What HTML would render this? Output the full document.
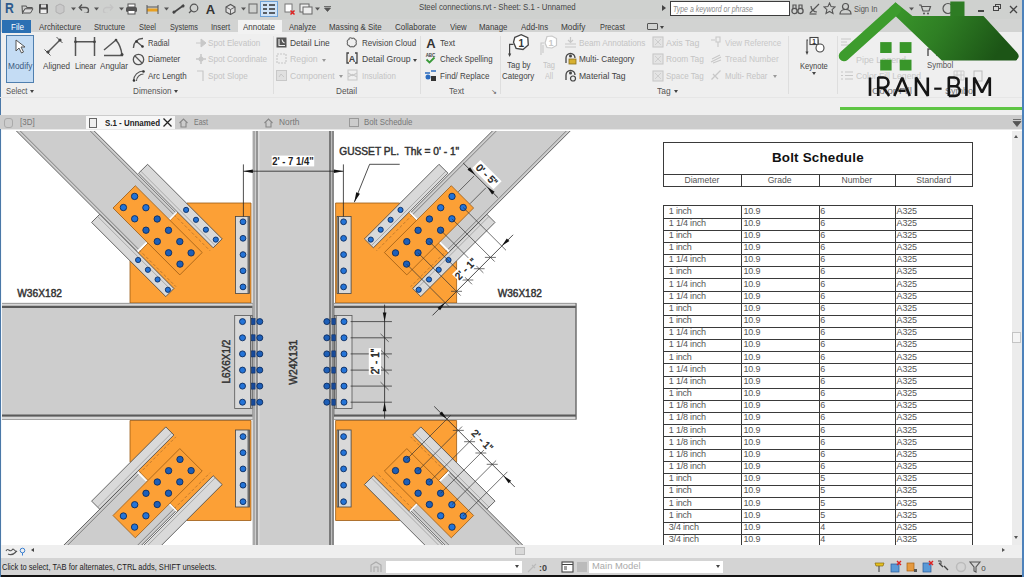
<!DOCTYPE html>
<html><head><meta charset="utf-8">
<style>
*{margin:0;padding:0;box-sizing:border-box}
html,body{width:1024px;height:577px;overflow:hidden;background:#fff;font-family:"Liberation Sans",sans-serif;color:#333}
.a{position:absolute;white-space:pre}
#title{left:0;top:0;width:1024px;height:19px;background:#cfd1cf}
#tabs{left:0;top:19px;width:1024px;height:13px;background:#d2d3d2}
#ribbon{left:0;top:32px;width:1024px;height:64px;background:#efefef}
#rib2{left:0;top:96px;width:1024px;height:19px;background:#efefef}
#vtabs{left:0;top:115px;width:1024px;height:14px;background:#cfcfcf}
#canvas{left:0;top:129px;width:1024px;height:416px;background:#fff}
#hsb{left:0;top:545px;width:1024px;height:13px;background:#efefef}
#status{left:0;top:558px;width:1024px;height:17px;background:#d4d4d4}
#blk{left:0;top:575px;width:1024px;height:2px;background:#111}
.t8{font-size:8px}
.tab{font-size:8.2px;color:#3a3a3a;top:22px}
.rb{font-size:8.4px;color:#333;word-spacing:2px}
.gr{color:#b9b9b9}
</style></head><body>
<div id="title" class="a"></div>
<div id="tabs" class="a"></div>
<div id="ribbon" class="a"></div>
<div id="rib2" class="a"></div>
<div id="vtabs" class="a"></div>
<div id="canvas" class="a"></div>
<div id="hsb" class="a"></div>
<div id="status" class="a"></div>
<div id="blk" class="a"></div>
<div class="a" style="left:0.0px;top:0.0px;width:1.3px;height:577.0px;background:#4a78a8"></div>
<div class="a" style="left:1.3px;top:129.0px;width:1.0px;height:416.0px;background:#f4f8fc"></div>
<div class="a" style="left:4.7px;top:3.3px;line-height:10px;font-size:15px;color:#2d5a8c;font-weight:bold;transform-origin:0 50%;transform:scaleX(0.812);">R</div>
<div class="a" style="left:418.7px;top:1.6px;line-height:10px;font-size:9px;color:#444;transform-origin:0 50%;transform:scaleX(0.867);">Steel connections.rvt - Sheet: S.1 - Unnamed</div>
<div class="a" style="left:670.2px;top:1.2px;width:119.7px;height:14.5px;background:#fff;border:1px solid #3c3c3c"></div>
<div class="a" style="left:673.0px;top:3.5px;line-height:10px;font-size:9px;color:#8a8a8a;transform-origin:0 50%;transform:scaleX(0.773);font-style:italic;">Type a keyword or phrase</div>
<div class="a" style="left:662px;top:5px;width:0;height:0;border-left:4px solid #444;border-top:3.5px solid transparent;border-bottom:3.5px solid transparent"></div>
<div class="a" style="left:854.3px;top:4.0px;line-height:10px;font-size:9px;color:#555;transform-origin:0 50%;transform:scaleX(0.835);">Sign In</div>
<div class="a" style="left:978.0px;top:10.3px;width:5.5px;height:1.8px;background:#444"></div>
<div class="a" style="left:995.0px;top:4.0px;width:6.0px;height:5.0px;border:1px solid #444"></div>
<div class="a" style="left:993.0px;top:6.0px;width:6.0px;height:5.0px;border:1px solid #444;background:#d6d6d6"></div>
<svg class="a" style="left:1009px;top:4.5px" width="9" height="9"><path d="M1 1L8 8M8 1L1 8" stroke="#444" stroke-width="1.3"/></svg>
<div class="a" style="left:2.0px;top:20.0px;width:29.4px;height:12.6px;background:#2b70b3"></div>
<div class="a" style="left:10.5px;top:21.5px;line-height:10px;font-size:9px;color:#fff;transform-origin:0 50%;transform:scaleX(0.896);">File</div>
<div class="a" style="left:237.6px;top:19.6px;width:44.4px;height:14.0px;background:#f2f2f2"></div>
<div class="a" style="left:39.0px;top:22.0px;line-height:10px;font-size:9px;color:#3a3a3a;transform-origin:0 50%;transform:scaleX(0.875);">Architecture</div>
<div class="a" style="left:94.0px;top:22.0px;line-height:10px;font-size:9px;color:#3a3a3a;transform-origin:0 50%;transform:scaleX(0.849);">Structure</div>
<div class="a" style="left:139.0px;top:22.0px;line-height:10px;font-size:9px;color:#3a3a3a;transform-origin:0 50%;transform:scaleX(0.829);">Steel</div>
<div class="a" style="left:169.8px;top:22.0px;line-height:10px;font-size:9px;color:#3a3a3a;transform-origin:0 50%;transform:scaleX(0.809);">Systems</div>
<div class="a" style="left:211.0px;top:22.0px;line-height:10px;font-size:9px;color:#3a3a3a;transform-origin:0 50%;transform:scaleX(0.844);">Insert</div>
<div class="a" style="left:243.2px;top:22.0px;line-height:10px;font-size:9px;color:#3a3a3a;transform-origin:0 50%;transform:scaleX(0.888);">Annotate</div>
<div class="a" style="left:289.2px;top:22.0px;line-height:10px;font-size:9px;color:#3a3a3a;transform-origin:0 50%;transform:scaleX(0.846);">Analyze</div>
<div class="a" style="left:329.0px;top:22.0px;line-height:10px;font-size:9px;color:#3a3a3a;transform-origin:0 50%;transform:scaleX(0.876);">Massing &amp; Site</div>
<div class="a" style="left:395.3px;top:22.0px;line-height:10px;font-size:9px;color:#3a3a3a;transform-origin:0 50%;transform:scaleX(0.891);">Collaborate</div>
<div class="a" style="left:449.5px;top:22.0px;line-height:10px;font-size:9px;color:#3a3a3a;transform-origin:0 50%;transform:scaleX(0.863);">View</div>
<div class="a" style="left:479.4px;top:22.0px;line-height:10px;font-size:9px;color:#3a3a3a;transform-origin:0 50%;transform:scaleX(0.873);">Manage</div>
<div class="a" style="left:521.0px;top:22.0px;line-height:10px;font-size:9px;color:#3a3a3a;transform-origin:0 50%;transform:scaleX(0.877);">Add-Ins</div>
<div class="a" style="left:561.4px;top:22.0px;line-height:10px;font-size:9px;color:#3a3a3a;transform-origin:0 50%;transform:scaleX(0.917);">Modify</div>
<div class="a" style="left:599.5px;top:22.0px;line-height:10px;font-size:9px;color:#3a3a3a;transform-origin:0 50%;transform:scaleX(0.816);">Precast</div>
<div class="a" style="left:647.0px;top:23.0px;width:11.0px;height:7.0px;border:1px solid #555;border-radius:1px"></div>
<div class="a" style="left:660px;top:26px;border-top:3px solid #444;border-left:2.5px solid transparent;border-right:2.5px solid transparent"></div>
<div class="a" style="left:0.0px;top:96.5px;width:1024.0px;height:1.0px;background:#e6e6e6"></div>
<div class="a" style="left:272.8px;top:36.0px;width:1.0px;height:58.0px;background:#dedede"></div>
<div class="a" style="left:419.7px;top:36.0px;width:1.0px;height:58.0px;background:#dedede"></div>
<div class="a" style="left:499.7px;top:36.0px;width:1.0px;height:58.0px;background:#dedede"></div>
<div class="a" style="left:788.3px;top:36.0px;width:1.0px;height:58.0px;background:#dedede"></div>
<div class="a" style="left:837.0px;top:36.0px;width:1.0px;height:58.0px;background:#dedede"></div>
<div class="a" style="left:6.2px;top:35.2px;width:27.7px;height:47.4px;background:#c4dcf4;border:1px solid #4f7faf"></div>
<div class="a" style="left:8.0px;top:60.8px;line-height:10px;font-size:9px;color:#3d5a80;transform-origin:0 50%;transform:scaleX(0.924);">Modify</div>
<div class="a" style="left:5.5px;top:85.8px;line-height:10px;font-size:9px;color:#555;transform-origin:0 50%;transform:scaleX(0.860);">Select</div>
<div class="a" style="left:30px;top:89.5px;border-top:3px solid #444;border-left:2.5px solid transparent;border-right:2.5px solid transparent"></div>
<div class="a" style="left:43.0px;top:60.7px;line-height:10px;font-size:9px;color:#444;transform-origin:0 50%;transform:scaleX(0.899);">Aligned</div>
<div class="a" style="left:75.0px;top:60.7px;line-height:10px;font-size:9px;color:#444;transform-origin:0 50%;transform:scaleX(0.839);">Linear</div>
<div class="a" style="left:100.0px;top:60.7px;line-height:10px;font-size:9px;color:#444;transform-origin:0 50%;transform:scaleX(0.903);">Angular</div>
<div class="a" style="left:147.6px;top:37.9px;line-height:10px;font-size:9px;color:#444;transform-origin:0 50%;transform:scaleX(0.839);">Radial</div>
<div class="a" style="left:147.6px;top:54.4px;line-height:10px;font-size:9px;color:#444;transform-origin:0 50%;transform:scaleX(0.882);">Diameter</div>
<div class="a" style="left:147.6px;top:71.0px;line-height:10px;font-size:9px;color:#444;transform-origin:0 50%;transform:scaleX(0.887);">Arc Length</div>
<div class="a" style="left:132.5px;top:86.2px;line-height:10px;font-size:9px;color:#555;transform-origin:0 50%;transform:scaleX(0.906);">Dimension</div>
<div class="a" style="left:174px;top:90px;border-top:3px solid #444;border-left:2.5px solid transparent;border-right:2.5px solid transparent"></div>
<div class="a" style="left:207.7px;top:37.9px;line-height:10px;font-size:9px;color:#c4c4c4;transform-origin:0 50%;transform:scaleX(0.899);">Spot Elevation</div>
<div class="a" style="left:207.7px;top:54.4px;line-height:10px;font-size:9px;color:#c4c4c4;transform-origin:0 50%;transform:scaleX(0.909);">Spot Coordinate</div>
<div class="a" style="left:207.7px;top:71.0px;line-height:10px;font-size:9px;color:#c4c4c4;transform-origin:0 50%;transform:scaleX(0.902);">Spot Slope</div>
<div class="a" style="left:290.4px;top:37.9px;line-height:10px;font-size:9px;color:#444;transform-origin:0 50%;transform:scaleX(0.936);">Detail Line</div>
<div class="a" style="left:290.4px;top:54.4px;line-height:10px;font-size:9px;color:#c4c4c4;transform-origin:0 50%;transform:scaleX(0.968);">Region</div>
<div class="a" style="left:290.4px;top:71.0px;line-height:10px;font-size:9px;color:#c4c4c4;transform-origin:0 50%;transform:scaleX(0.959);">Component</div>
<div class="a" style="left:321.5px;top:58.5px;border-top:3px solid #999;border-left:2.5px solid transparent;border-right:2.5px solid transparent"></div>
<div class="a" style="left:338.5px;top:75px;border-top:3px solid #999;border-left:2.5px solid transparent;border-right:2.5px solid transparent"></div>
<div class="a" style="left:361.5px;top:37.9px;line-height:10px;font-size:9px;color:#444;transform-origin:0 50%;transform:scaleX(0.894);">Revision Cloud</div>
<div class="a" style="left:361.5px;top:54.4px;line-height:10px;font-size:9px;color:#444;transform-origin:0 50%;transform:scaleX(0.960);">Detail Group</div>
<div class="a" style="left:361.5px;top:71.0px;line-height:10px;font-size:9px;color:#c4c4c4;transform-origin:0 50%;transform:scaleX(0.880);">Insulation</div>
<div class="a" style="left:413px;top:58.5px;border-top:3px solid #444;border-left:2.5px solid transparent;border-right:2.5px solid transparent"></div>
<div class="a" style="left:336.0px;top:86.0px;line-height:10px;font-size:9px;color:#555;transform-origin:0 50%;transform:scaleX(0.913);">Detail</div>
<div class="a" style="left:439.9px;top:37.9px;line-height:10px;font-size:9px;color:#444;transform-origin:0 50%;transform:scaleX(0.909);">Text</div>
<div class="a" style="left:439.9px;top:54.4px;line-height:10px;font-size:9px;color:#444;transform-origin:0 50%;transform:scaleX(0.876);">Check Spelling</div>
<div class="a" style="left:439.9px;top:71.0px;line-height:10px;font-size:9px;color:#444;transform-origin:0 50%;transform:scaleX(0.890);">Find/ Replace</div>
<div class="a" style="left:448.5px;top:86.0px;line-height:10px;font-size:9px;color:#555;transform-origin:0 50%;transform:scaleX(0.909);">Text</div>
<div class="a" style="left:491px;top:89px;font-size:7px;line-height:6px;color:#555">&#x2198;</div>
<div class="a" style="left:506.5px;top:60.4px;line-height:10px;font-size:9px;color:#444;transform-origin:0 50%;transform:scaleX(0.890);">Tag by</div>
<div class="a" style="left:502.2px;top:71.2px;line-height:10px;font-size:9px;color:#444;transform-origin:0 50%;transform:scaleX(0.882);">Category</div>
<div class="a" style="left:543.0px;top:60.4px;line-height:10px;font-size:9px;color:#c4c4c4;transform-origin:0 50%;transform:scaleX(0.827);">Tag</div>
<div class="a" style="left:545.0px;top:71.2px;line-height:10px;font-size:9px;color:#c4c4c4;transform-origin:0 50%;transform:scaleX(0.800);">All</div>
<div class="a" style="left:578.8px;top:37.9px;line-height:10px;font-size:9px;color:#c4c4c4;transform-origin:0 50%;transform:scaleX(0.909);">Beam Annotations</div>
<div class="a" style="left:578.8px;top:54.4px;line-height:10px;font-size:9px;color:#444;transform-origin:0 50%;transform:scaleX(0.908);">Multi- Category</div>
<div class="a" style="left:578.8px;top:71.0px;line-height:10px;font-size:9px;color:#444;transform-origin:0 50%;transform:scaleX(0.950);">Material Tag</div>
<div class="a" style="left:666.0px;top:37.9px;line-height:10px;font-size:9px;color:#c4c4c4;transform-origin:0 50%;transform:scaleX(0.987);">Axis Tag</div>
<div class="a" style="left:666.0px;top:54.4px;line-height:10px;font-size:9px;color:#c4c4c4;transform-origin:0 50%;transform:scaleX(0.925);">Room Tag</div>
<div class="a" style="left:666.0px;top:71.0px;line-height:10px;font-size:9px;color:#c4c4c4;transform-origin:0 50%;transform:scaleX(0.892);">Space Tag</div>
<div class="a" style="left:724.6px;top:37.9px;line-height:10px;font-size:9px;color:#c8c8c8;transform-origin:0 50%;transform:scaleX(0.885);">View Reference</div>
<div class="a" style="left:724.6px;top:54.4px;line-height:10px;font-size:9px;color:#c8c8c8;transform-origin:0 50%;transform:scaleX(0.931);">Tread Number</div>
<div class="a" style="left:724.6px;top:71.0px;line-height:10px;font-size:9px;color:#c4c4c4;transform-origin:0 50%;transform:scaleX(0.865);">Multi- Rebar</div>
<div class="a" style="left:773px;top:75px;border-top:3px solid #999;border-left:2.5px solid transparent;border-right:2.5px solid transparent"></div>
<div class="a" style="left:657.4px;top:86.0px;line-height:10px;font-size:9px;color:#555;transform-origin:0 50%;transform:scaleX(0.937);">Tag</div>
<div class="a" style="left:674px;top:90px;border-top:3px solid #444;border-left:2.5px solid transparent;border-right:2.5px solid transparent"></div>
<div class="a" style="left:800.0px;top:60.5px;line-height:10px;font-size:9px;color:#444;transform-origin:0 50%;transform:scaleX(0.839);">Keynote</div>
<div class="a" style="left:812px;top:72px;border-top:3px solid #444;border-left:2.5px solid transparent;border-right:2.5px solid transparent"></div>
<div class="a" style="left:856.0px;top:54.5px;line-height:10px;font-size:9px;color:#c8c8c8;transform-origin:0 50%;transform:scaleX(0.989);">Pipe Legend</div>
<div class="a" style="left:856.0px;top:71.0px;line-height:10px;font-size:9px;color:#c8c8c8;transform-origin:0 50%;transform:scaleX(0.955);">Color Fill Legend</div>
<div class="a" style="left:926.5px;top:60.0px;line-height:10px;font-size:9px;color:#555;transform-origin:0 50%;transform:scaleX(0.873);">Symbol</div>
<div class="a" style="left:872.0px;top:86.0px;line-height:10px;font-size:9px;color:#777;transform-origin:0 50%;transform:scaleX(1.127);">Color Fill</div>
<div class="a" style="left:945.0px;top:86.0px;line-height:10px;font-size:9px;color:#777;transform-origin:0 50%;transform:scaleX(1.000);">Symbol</div>
<div class="a" style="left:0.0px;top:115.0px;width:1024.0px;height:14.0px;background:#cccccc"></div>
<div class="a" style="left:1.0px;top:128.6px;width:1022.0px;height:1.0px;background:#e8e8e8"></div>
<div class="a" style="left:86.1px;top:116.0px;width:89.2px;height:13.0px;background:#f7f7f7"></div>
<div class="a" style="left:19.9px;top:117.0px;line-height:10px;font-size:9px;color:#777;transform-origin:0 50%;transform:scaleX(0.885);">[3D]</div>
<div class="a" style="left:104.6px;top:117.5px;line-height:10px;font-size:9px;color:#222;font-weight:bold;transform-origin:0 50%;transform:scaleX(0.880);">S.1 - Unnamed</div>
<svg class="a" style="left:162px;top:117px" width="11" height="11"><path d="M1.5 1.5L9.5 9.5M9.5 1.5L1.5 9.5" stroke="#222" stroke-width="1.3"/></svg>
<div class="a" style="left:194.0px;top:117.0px;line-height:10px;font-size:9px;color:#777;transform-origin:0 50%;transform:scaleX(0.777);">East</div>
<div class="a" style="left:279.0px;top:117.0px;line-height:10px;font-size:9px;color:#777;transform-origin:0 50%;transform:scaleX(0.927);">North</div>
<div class="a" style="left:363.8px;top:117.0px;line-height:10px;font-size:9px;color:#777;transform-origin:0 50%;transform:scaleX(0.872);">Bolt Schedule</div>
<div class="a" style="left:88.6px;top:117.6px;width:8.6px;height:10.0px;border:1px solid #666;background:#eee"></div>
<div class="a" style="left:349.0px;top:117.6px;width:10.0px;height:9.0px;border:1px solid #999"></div>
<div class="a" style="left:4.0px;top:117.6px;width:9.0px;height:10.0px;border:1px solid #aaa;border-radius:3px"></div>
<div class="a" style="left:839.6px;top:107.4px;width:182.4px;height:3.0px;background:#5ec544"></div>
<div class="a" style="left:1022.2px;top:0.0px;width:1.8px;height:577.0px;background:#4d82bb"></div>
<div class="a" style="left:1011.5px;top:131.0px;width:10.0px;height:414.0px;background:#ececec"></div>
<div class="a" style="left:1014px;top:135px;border-bottom:3px solid #555;border-left:2.5px solid transparent;border-right:2.5px solid transparent"></div>
<div class="a" style="left:1014px;top:536px;border-top:3px solid #555;border-left:2.5px solid transparent;border-right:2.5px solid transparent"></div>
<div class="a" style="left:1011.5px;top:332.3px;width:9.7px;height:11.0px;background:#f4f4f4;border:1px solid #c4c4c4"></div>
<div class="a" style="left:1012.0px;top:545.0px;width:10.0px;height:13.0px;background:#efefef"></div>
<div class="a" style="left:515.3px;top:546.7px;width:9.7px;height:8.8px;background:#d9d9d9;border:1px solid #bbb"></div>
<div class="a" style="left:1002px;top:548px;border-left:3px solid #555;border-top:2.5px solid transparent;border-bottom:2.5px solid transparent"></div>
<div class="a" style="left:31px;top:548px;border-right:3px solid #444;border-top:2.5px solid transparent;border-bottom:2.5px solid transparent"></div>
<div class="a" style="left:2.0px;top:561.5px;line-height:10px;font-size:9px;color:#222;transform-origin:0 50%;transform:scaleX(0.837);">Click to select, TAB for alternates, CTRL adds, SHIFT unselects.</div>
<div class="a" style="left:386.4px;top:560.5px;width:135.6px;height:12.3px;background:#fff"></div>
<div class="a" style="left:589.0px;top:560.5px;width:133.5px;height:12.3px;background:#fff"></div>
<div class="a" style="left:591.5px;top:561.3px;line-height:10px;font-size:9px;color:#aaa;transform-origin:0 50%;transform:scaleX(1.043);">Main Model</div>
<div class="a" style="left:515px;top:565px;border-top:3px solid #444;border-left:2.5px solid transparent;border-right:2.5px solid transparent"></div>
<div class="a" style="left:716px;top:565px;border-top:3px solid #444;border-left:2.5px solid transparent;border-right:2.5px solid transparent"></div>
<svg class="a" style="left:21px;top:4px" width="13" height="10" viewBox="0 0 13 10"><path d="M1 2h4l1 1.5h5v1.5H4L1.5 9z" fill="none" stroke="#555" stroke-width="1.1"/><path d="M1.5 9L4 4.8h8L9.5 9z" fill="#ddd" stroke="#555" stroke-width="1"/></svg>
<svg class="a" style="left:38px;top:3px" width="11" height="11" viewBox="0 0 11 11"><rect x="1" y="1" width="9" height="9.5" rx="1" fill="#4a4a4a"/><rect x="3" y="1.5" width="5" height="3" fill="#ddd"/><rect x="2.5" y="6.5" width="6" height="3.5" fill="#eee"/></svg>
<svg class="a" style="left:54px;top:3px" width="12" height="12" viewBox="0 0 12 12"><path d="M2 3l4-2 4 2v6l-4 2-4-2z" fill="#c9c9c9" stroke="#b0b0b0"/></svg>
<svg class="a" style="left:71px;top:7px" width="5" height="4" viewBox="0 0 5 4"><path d="M0 0.5h5L2.5 3.5z" fill="#555"/></svg>
<svg class="a" style="left:94px;top:7px" width="5" height="4" viewBox="0 0 5 4"><path d="M0 0.5h5L2.5 3.5z" fill="#555"/></svg>
<svg class="a" style="left:119px;top:7px" width="5" height="4" viewBox="0 0 5 4"><path d="M0 0.5h5L2.5 3.5z" fill="#555"/></svg>
<svg class="a" style="left:164px;top:7px" width="5" height="4" viewBox="0 0 5 4"><path d="M0 0.5h5L2.5 3.5z" fill="#555"/></svg>
<svg class="a" style="left:241px;top:7px" width="5" height="4" viewBox="0 0 5 4"><path d="M0 0.5h5L2.5 3.5z" fill="#555"/></svg>
<svg class="a" style="left:909px;top:7px" width="5" height="4" viewBox="0 0 5 4"><path d="M0 0.5h5L2.5 3.5z" fill="#555"/></svg>
<svg class="a" style="left:78px;top:3px" width="12" height="10" viewBox="0 0 12 10"><path d="M4 1.5L1.2 4.5 4 7.5M1.5 4.5h6a3 3 0 0 1 0 6H6" fill="none" stroke="#555" stroke-width="1.3"/></svg>
<svg class="a" style="left:102px;top:3px" width="12" height="10" viewBox="0 0 12 10"><path d="M8 1.5l2.8 3-2.8 3M10.5 4.5h-6a3 3 0 0 0 0 6H6" fill="none" stroke="#c4c4c4" stroke-width="1.3"/></svg>
<svg class="a" style="left:125px;top:3px" width="13" height="12" viewBox="0 0 13 12"><rect x="3" y="1" width="7" height="3" fill="#fff" stroke="#555"/><rect x="1" y="4" width="11" height="5" rx="1.5" fill="#555"/><rect x="3" y="7.5" width="7" height="3.5" fill="#fff" stroke="#555"/></svg>
<svg class="a" style="left:146px;top:4px" width="13" height="10" viewBox="0 0 13 10"><rect x="1" y="4.5" width="11" height="3" fill="#e8a020"/><path d="M1 1v9M12 1v9M1 3h11" stroke="#555" stroke-width="1"/></svg>
<svg class="a" style="left:171px;top:3px" width="15" height="12" viewBox="0 0 15 12"><path d="M2 10L13 2" stroke="#444" stroke-width="1.6"/><circle cx="3" cy="9" r="1.5" fill="#444"/><circle cx="12" cy="3" r="1.5" fill="#444"/></svg>
<svg class="a" style="left:188px;top:3px" width="11" height="11" viewBox="0 0 11 11"><circle cx="6" cy="5" r="3.8" fill="none" stroke="#555" stroke-width="1.2"/><path d="M1 10l3-3" stroke="#555" stroke-width="1.2"/></svg>
<svg class="a" style="left:205px;top:2px" width="11" height="13" viewBox="0 0 11 13"><text x="5.5" y="11.5" text-anchor="middle" font-family="Liberation Sans" font-weight="bold" font-size="13" fill="#333">A</text></svg>
<svg class="a" style="left:224px;top:3px" width="13" height="12" viewBox="0 0 13 12"><path d="M2 4l4.5-2.5L11 4v5l-4.5 2.5L2 9z" fill="#ddd" stroke="#555" stroke-width="1.1"/><path d="M2 4l4.5 2.5L11 4M6.5 6.5v5" fill="none" stroke="#555" stroke-width="0.9"/></svg>
<svg class="a" style="left:248px;top:3px" width="10" height="11" viewBox="0 0 10 11"><rect x="1" y="1" width="8" height="9" fill="none" stroke="#666"/></svg>
<svg class="a" style="left:260px;top:1px" width="18" height="16" viewBox="0 0 18 16"><rect x="0.5" y="0.5" width="17" height="15" fill="#cfe3f7" stroke="#6fa3d8"/><path d="M3 4h4M9 4h6M3 8h4M9 8h6M3 12h4M9 12h6" stroke="#333" stroke-width="1.5"/></svg>
<svg class="a" style="left:284px;top:3px" width="12" height="12" viewBox="0 0 12 12"><rect x="1" y="1" width="7" height="8" fill="#fff" stroke="#777"/><path d="M6.5 7.5l4 4M10.5 7.5l-4 4" stroke="#d22" stroke-width="1.5"/></svg>
<svg class="a" style="left:299px;top:3px" width="14" height="12" viewBox="0 0 14 12"><rect x="1" y="1" width="9" height="8" fill="#eee" stroke="#666"/><rect x="4" y="4" width="9" height="7" fill="#eee" stroke="#666"/></svg>
<svg class="a" style="left:315px;top:7px" width="5" height="4" viewBox="0 0 5 4"><path d="M0 0.5h5L2.5 3.5z" fill="#555"/></svg>
<svg class="a" style="left:324px;top:6px" width="7" height="6" viewBox="0 0 7 6"><path d="M0 0.5h7M0.5 2h6L3.5 5.5z" fill="#555" stroke="#555" stroke-width="0.8"/></svg>
<svg class="a" style="left:791px;top:3px" width="13" height="12" viewBox="0 0 13 12"><circle cx="3.5" cy="8" r="2.6" fill="none" stroke="#555" stroke-width="1.3"/><circle cx="9.5" cy="8" r="2.6" fill="none" stroke="#555" stroke-width="1.3"/><path d="M2 6V2h3v4M8 6V2h3v4" fill="none" stroke="#555" stroke-width="1.2"/></svg>
<svg class="a" style="left:808px;top:2px" width="13" height="13" viewBox="0 0 13 13"><path d="M2 11l9-9M3 4a6 6 0 0 0 6 6" fill="none" stroke="#555" stroke-width="1.2"/><path d="M1.5 12h7" stroke="#555" stroke-width="1.2"/></svg>
<svg class="a" style="left:823px;top:2px" width="13" height="13" viewBox="0 0 13 13"><path d="M6.5 1l1.6 3.6 3.9.4-2.9 2.6.9 3.9-3.5-2-3.5 2 .9-3.9L1 5l3.9-.4z" fill="none" stroke="#555" stroke-width="1.1"/></svg>
<svg class="a" style="left:839px;top:2px" width="13" height="13" viewBox="0 0 13 13"><circle cx="6.5" cy="4.5" r="3" fill="none" stroke="#555" stroke-width="1.2"/><path d="M1 12c0-3 2.5-4.5 5.5-4.5S12 9 12 12z" fill="none" stroke="#555" stroke-width="1.2"/></svg>
<svg class="a" style="left:918px;top:3px" width="14" height="12" viewBox="0 0 14 12"><path d="M1 2h2l2 6h6l1.5-4.5H4" fill="none" stroke="#555" stroke-width="1.2"/><circle cx="6" cy="10.5" r="1" fill="#555"/><circle cx="10" cy="10.5" r="1" fill="#555"/></svg>
<svg class="a" style="left:942px;top:2px" width="12" height="13" viewBox="0 0 12 13"><circle cx="6" cy="6.5" r="5" fill="none" stroke="#555" stroke-width="1.2"/></svg>
<svg class="a" style="left:12px;top:38px" width="16" height="18" viewBox="0 0 16 18"><path d="M4 2v11l3-3 2.5 5 2-1-2.5-5h4z" fill="#fff" stroke="#555" stroke-width="1"/></svg>
<svg class="a" style="left:42px;top:36px" width="22" height="22" viewBox="0 0 22 22"><path d="M6 16L18 4" stroke="#555" stroke-width="1.4"/><path d="M2.5 13.5l6 6M14.5 1l6 6" stroke="#555" stroke-width="1"/><circle cx="6" cy="16" r="1.6" fill="#444"/><circle cx="18" cy="4" r="1.6" fill="#444"/></svg>
<svg class="a" style="left:73px;top:36px" width="24" height="21" viewBox="0 0 24 21"><path d="M2.5 1v19M21.5 1v19M2.5 5.8h19" stroke="#555" stroke-width="1.5"/><circle cx="2.5" cy="5.8" r="1.4" fill="#444"/><circle cx="21.5" cy="5.8" r="1.4" fill="#444"/></svg>
<svg class="a" style="left:102px;top:36px" width="24" height="21" viewBox="0 0 24 21"><path d="M2 14L14 4M2 19.5h19" stroke="#555" stroke-width="1.5"/><path d="M14 4Q19 10 20 19" fill="none" stroke="#555" stroke-width="1.5"/><circle cx="14" cy="4" r="1.3" fill="#444"/><circle cx="20" cy="18.5" r="1.5" fill="#444"/></svg>
<svg class="a" style="left:132px;top:37px" width="13" height="11" viewBox="0 0 13 11"><path d="M1.5 11A9 9 0 0 1 11 1.5" fill="none" stroke="#555" stroke-width="1.4"/><path d="M4.5 4.5l6 5" stroke="#555" stroke-width="1.3"/><circle cx="4.5" cy="4.5" r="1.3" fill="#333"/><circle cx="10.5" cy="9.5" r="1.3" fill="#333"/></svg>
<svg class="a" style="left:132px;top:53px" width="13" height="13" viewBox="0 0 13 13"><circle cx="6.5" cy="6.5" r="5.2" fill="none" stroke="#555" stroke-width="1.3"/><path d="M3 3l7 7" stroke="#555" stroke-width="1.3"/></svg>
<svg class="a" style="left:132px;top:69px" width="13" height="13" viewBox="0 0 13 13"><path d="M1.5 12A10 10 0 0 1 11.5 2M4.5 12A7 7 0 0 1 11.5 5" fill="none" stroke="#555" stroke-width="1.1"/><circle cx="2" cy="11.5" r="1.3" fill="#333"/><circle cx="11.5" cy="2.5" r="1.3" fill="#333"/></svg>
<svg class="a" style="left:195px;top:37px" width="12" height="11" viewBox="0 0 12 11"><path d="M1 6h5M6 2l5 4-5 4z" fill="#c8c8c8" stroke="#c8c8c8"/></svg>
<svg class="a" style="left:195px;top:53px" width="12" height="12" viewBox="0 0 12 12"><path d="M6 1v10M1 6h10" stroke="#c8c8c8" stroke-width="1.5"/><circle cx="6" cy="6" r="2.5" fill="#c8c8c8"/></svg>
<svg class="a" style="left:196px;top:70px" width="10" height="12" viewBox="0 0 10 12"><path d="M1 1h6v10" fill="none" stroke="#c8c8c8" stroke-width="1.2"/></svg>
<svg class="a" style="left:276px;top:37px" width="11" height="11" viewBox="0 0 11 11"><rect x="0.5" y="0.5" width="10" height="10" fill="#555"/><path d="M3 2v6.5h6M6 2.5A4 4 0 0 0 8.5 6" fill="none" stroke="#eee" stroke-width="1.1"/></svg>
<svg class="a" style="left:276px;top:53px" width="11" height="11" viewBox="0 0 11 11"><rect x="1" y="1" width="9" height="9" fill="none" stroke="#c8c8c8" stroke-width="1.2" stroke-dasharray="2,1"/></svg>
<svg class="a" style="left:276px;top:70px" width="11" height="11" viewBox="0 0 11 11"><rect x="0.5" y="0.5" width="10" height="10" fill="#e0e0e0" stroke="#c8c8c8"/><path d="M3 7l2-3 3 3" fill="none" stroke="#c8c8c8"/></svg>
<svg class="a" style="left:346px;top:37px" width="12" height="11" viewBox="0 0 12 11"><path d="M3 1.5a2 2 0 0 1 3 0 2 2 0 0 1 3 1 2 2 0 0 1 1 3 2 2 0 0 1-1 3 2 2 0 0 1-3 1 2 2 0 0 1-3-1 2 2 0 0 1-1.5-3 2 2 0 0 1 1.5-3z" fill="none" stroke="#666" stroke-width="1.1"/></svg>
<svg class="a" style="left:346px;top:52px" width="12" height="12" viewBox="0 0 12 12"><path d="M3 1H1v10h2M9 1h2v10H9" fill="none" stroke="#444" stroke-width="1.3"/><text x="6" y="10" text-anchor="middle" font-family="Liberation Sans" font-weight="bold" font-size="9" fill="#444">A</text></svg>
<svg class="a" style="left:347px;top:69px" width="11" height="12" viewBox="0 0 11 12"><path d="M1 1h9v10H1zM1 4l4.5 2.5L10 4M1 8l4.5-2.5L10 8" fill="none" stroke="#c8c8c8" stroke-width="1.1"/></svg>
<svg class="a" style="left:425px;top:37px" width="12" height="11" viewBox="0 0 12 11"><text x="6" y="10.5" text-anchor="middle" font-family="Liberation Sans" font-weight="bold" font-size="13" fill="#333">A</text></svg>
<svg class="a" style="left:424px;top:52px" width="13" height="12" viewBox="0 0 13 12"><text x="6.5" y="4.5" text-anchor="middle" font-family="Liberation Sans" font-weight="bold" font-size="4.5" fill="#444">ABC</text><path d="M2.5 7.5l3 3 5-5" fill="none" stroke="#3a9a3a" stroke-width="1.8"/></svg>
<svg class="a" style="left:424px;top:69px" width="13" height="13" viewBox="0 0 13 13"><path d="M1 4h5M7 2h5" stroke="#2b6cc0" stroke-width="1.5"/><circle cx="4" cy="8" r="2.5" fill="#2b6cc0"/><rect x="7" y="7" width="5" height="5" fill="#333"/></svg>
<svg class="a" style="left:505px;top:34px" width="26" height="24" viewBox="0 0 26 24"><path d="M9.8 3.3l6.4-2.6 6.6 3 .5 7.3-5.3 4.5-6.9-1.2-2.6-6z" fill="#fff" stroke="#444" stroke-width="1.3"/><text x="16.2" y="13" text-anchor="middle" font-family="Liberation Sans" font-weight="bold" font-size="10" fill="#333">1</text><path d="M8.5 10.3H4.6v11" fill="none" stroke="#444" stroke-width="1.2"/><path d="M3 19.5L4.6 23 6.2 19.5z" fill="#444"/></svg>
<svg class="a" style="left:538px;top:35px" width="22" height="22" viewBox="0 0 22 22"><path d="M9 1.5l5-0.5 4.5 2.5 0 7-4.5 2.5-5-0.5-2-4.5z" fill="#fff" stroke="#c8c8c8" stroke-width="1.2"/><text x="13" y="11" text-anchor="middle" font-family="Liberation Sans" font-weight="bold" font-size="9" fill="#c8c8c8">1</text><path d="M6 8H3v12M5 10v8" fill="none" stroke="#c8c8c8" stroke-width="1.1"/></svg>
<svg class="a" style="left:564px;top:36px" width="13" height="12" viewBox="0 0 13 12"><path d="M6.5 1v5M4 4l2.5 2.5L9 4M1 8h11M1 11h11" fill="none" stroke="#c8c8c8" stroke-width="1.2"/></svg>
<svg class="a" style="left:564px;top:52px" width="13" height="13" viewBox="0 0 13 13"><path d="M2 11V6a4.5 4.5 0 0 1 9 0" fill="none" stroke="#444" stroke-width="1.3"/><circle cx="6.5" cy="4" r="1.5" fill="#444"/><rect x="5" y="7" width="7" height="5" fill="#d7b030" stroke="#8a7020" stroke-width="0.8"/></svg>
<svg class="a" style="left:564px;top:69px" width="13" height="13" viewBox="0 0 13 13"><path d="M2 11V6a4.5 4.5 0 0 1 9 0" fill="none" stroke="#444" stroke-width="1.3"/><circle cx="6.5" cy="4" r="1.5" fill="#444"/><circle cx="9" cy="9.5" r="2.5" fill="none" stroke="#444" stroke-width="1.2"/></svg>
<svg class="a" style="left:652px;top:36px" width="12" height="12" viewBox="0 0 12 12"><rect x="1" y="1" width="10" height="10" fill="#e4e4e4" stroke="#c8c8c8" stroke-width="1.1"/><path d="M3 3l6 6M3 9l6-6" stroke="#c8c8c8" stroke-width="0.8"/></svg>
<svg class="a" style="left:652px;top:53px" width="12" height="12" viewBox="0 0 12 12"><rect x="1" y="1" width="10" height="10" fill="#e4e4e4" stroke="#c8c8c8" stroke-width="1.1"/><path d="M3 3l6 6M3 9l6-6" stroke="#c8c8c8" stroke-width="0.8"/></svg>
<svg class="a" style="left:652px;top:70px" width="12" height="12" viewBox="0 0 12 12"><rect x="1" y="1" width="10" height="10" fill="#e4e4e4" stroke="#c8c8c8" stroke-width="1.1"/><path d="M3 3l6 6M3 9l6-6" stroke="#c8c8c8" stroke-width="0.8"/></svg>
<svg class="a" style="left:710px;top:36px" width="12" height="12" viewBox="0 0 12 12"><path d="M1 4h4M6 1h4v5H6zM8 6v5" fill="none" stroke="#c8c8c8" stroke-width="1.1"/></svg>
<svg class="a" style="left:710px;top:52px" width="12" height="12" viewBox="0 0 12 12"><path d="M1 10l10-5M2 7l8-4M3 11l8-3" fill="none" stroke="#c8c8c8" stroke-width="1.1"/></svg>
<svg class="a" style="left:710px;top:69px" width="12" height="12" viewBox="0 0 12 12"><path d="M1.5 10.5l9-9M3 5l5 5" fill="none" stroke="#c8c8c8" stroke-width="1.3"/></svg>
<svg class="a" style="left:804px;top:36px" width="22" height="20" viewBox="0 0 22 20"><path d="M7 4h7v6M4 4H3v13" fill="none" stroke="#444" stroke-width="1.1"/><rect x="6" y="1.5" width="8" height="7" fill="#fff" stroke="#444" stroke-width="1.1"/><text x="10" y="7.5" text-anchor="middle" font-family="Liberation Sans" font-weight="bold" font-size="6.5" fill="#333">1</text><circle cx="16" cy="12" r="4" fill="#fff" stroke="#444" stroke-width="1.1"/><path d="M1.5 15.5L3 19 4.5 15.5z" fill="#444"/></svg>
<svg class="a" style="left:840px;top:37px" width="14" height="12" viewBox="0 0 14 12"><path d="M1 2h10M1 5h6M1 8h10" stroke="#c8c8c8" stroke-width="1"/></svg>
<svg class="a" style="left:840px;top:70px" width="14" height="12" viewBox="0 0 14 12"><path d="M1 2h2M5 2h8M1 5.5h2M5 5.5h8M1 9h2M5 9h8" stroke="#c8c8c8" stroke-width="1.2"/></svg>
<svg class="a" style="left:927px;top:48px" width="10" height="8" viewBox="0 0 10 8"><rect x="1" y="1" width="9" height="8" fill="none" stroke="#444" stroke-width="1.3"/></svg>
<svg class="a" style="left:953px;top:70px" width="12" height="11" viewBox="0 0 12 11"><path d="M1 1h10v9H1zM1 5h10M4 1v9M8 1v9" fill="none" stroke="#ccc"/></svg>
<svg class="a" style="left:973px;top:70px" width="10" height="12" viewBox="0 0 10 12"><rect x="1" y="1" width="8" height="10" fill="none" stroke="#bbb"/></svg>
<svg class="a" style="left:1012px;top:118px" width="10" height="10" viewBox="0 0 10 10"><path d="M1 1.5h8M1 3.5h8L5 8.5z" fill="#555" stroke="#555" stroke-width="0.8"/></svg>
<svg class="a" style="left:178px;top:117px" width="11" height="11" viewBox="0 0 11 11"><path d="M1.5 6L5.5 2 9.5 6M3 5.5V10h5V5.5" fill="none" stroke="#888" stroke-width="1.1"/></svg>
<svg class="a" style="left:263px;top:117px" width="11" height="11" viewBox="0 0 11 11"><path d="M1.5 6L5.5 2 9.5 6M3 5.5V10h5V5.5" fill="none" stroke="#888" stroke-width="1.1"/></svg>
<svg class="a" style="left:5px;top:545px" width="14" height="12" viewBox="0 0 14 12"><path d="M1 6c2-4 4 2 6-1s3 3 5 1M3 9c2 1 5 1 8-2" fill="none" stroke="#555" stroke-width="1.1"/></svg>
<svg class="a" style="left:19px;top:547px" width="7" height="9" viewBox="0 0 7 9"><circle cx="3.5" cy="3.5" r="2.3" fill="none" stroke="#3a7fd0" stroke-width="1"/><path d="M3.5 6v2.5" stroke="#3a7fd0"/></svg>
<svg class="a" style="left:370px;top:561px" width="12" height="12" viewBox="0 0 12 12"><path d="M1 11V4l5-3 5 3v7M4 11V6h4v5" fill="none" stroke="#aaa" stroke-width="1.1"/></svg>
<svg class="a" style="left:526px;top:561px" width="12" height="12" viewBox="0 0 12 12"><path d="M2 11l8-8M6 4l3 3" fill="none" stroke="#bbb" stroke-width="1.1"/></svg>
<svg class="a" style="left:539px;top:562px" width="8" height="10" viewBox="0 0 8 10"><text x="4" y="8.5" text-anchor="middle" font-family="Liberation Sans" font-weight="bold" font-size="9" fill="#444">:0</text></svg>
<svg class="a" style="left:561px;top:561px" width="13" height="12" viewBox="0 0 13 12"><rect x="1" y="1" width="11" height="10" fill="#fff" stroke="#444" stroke-width="1.1"/><path d="M1 3.5h11M3 6h3M3 8h3" stroke="#444"/></svg>
<svg class="a" style="left:576px;top:561px" width="12" height="12" viewBox="0 0 12 12"><rect x="1" y="1" width="10" height="10" fill="#bbb"/></svg>
<svg class="a" style="left:873px;top:560px" width="13" height="14" viewBox="0 0 13 14"><path d="M2 3h9l-1 3H3z" fill="#e5c020" stroke="#886a10" stroke-width="0.7"/><path d="M6 6v6" stroke="#555" stroke-width="1.2"/></svg>
<svg class="a" style="left:889px;top:560px" width="14" height="14" viewBox="0 0 14 14"><rect x="2" y="4" width="8" height="8" fill="#5a9ad8" stroke="#2a5a98" stroke-width="0.7"/><path d="M8 1l4 4M12 1L8 5" stroke="#d22" stroke-width="1.4"/></svg>
<svg class="a" style="left:905px;top:560px" width="13" height="14" viewBox="0 0 13 14"><rect x="2" y="3" width="7" height="8" fill="#e59a40" stroke="#a86010" stroke-width="0.7"/><path d="M9 9h3v3H9z" fill="#555"/></svg>
<svg class="a" style="left:921px;top:560px" width="14" height="14" viewBox="0 0 14 14"><rect x="2" y="3" width="8" height="9" fill="#5a9ad8" stroke="#2a5a98" stroke-width="0.7"/><path d="M8 1l4 4M12 1L8 5" stroke="#d22" stroke-width="1.4"/></svg>
<svg class="a" style="left:937px;top:560px" width="14" height="14" viewBox="0 0 14 14"><path d="M2 3l4 4M7 6l4 4" stroke="#444" stroke-width="1.3"/><path d="M1 1h3v3" fill="none" stroke="#444"/></svg>
<svg class="a" style="left:955px;top:561px" width="12" height="12" viewBox="0 0 12 12"><circle cx="6" cy="6" r="4.5" fill="none" stroke="#bbb" stroke-width="1.5"/></svg>
<svg class="a" style="left:969px;top:560px" width="18" height="14" viewBox="0 0 18 14"><path d="M1 2h10L7 7v5L5 11V7z" fill="none" stroke="#555" stroke-width="1.1"/><text x="14.5" y="11" text-anchor="middle" font-family="Liberation Sans" font-size="8" fill="#444">0</text></svg>
<svg class="a" style="left:0;top:0" width="1024" height="120" viewBox="0 0 1024 120">
<defs><linearGradient id="rg" x1="0" y1="0" x2="1" y2="0.3"><stop offset="0" stop-color="#3a982b"/><stop offset="0.45" stop-color="#2f7f24"/><stop offset="1" stop-color="#1c5516"/></linearGradient></defs>
<rect x="950.3" y="1.5" width="14.2" height="16" fill="#2e7c24"/>
<path d="M895.4 2.3L912.4 16H983.5L1017 52.5Q1021 57 1016 60.6H941.8L895.4 16.1z" fill="url(#rg)"/>
<path d="M844 56L895.6 9.5" stroke="#3d9c2d" stroke-width="10.5" stroke-linecap="round"/>
<path d="M889 8.5L895.4 2.3 901 8.5z" fill="#3d9c2d"/>
<rect x="880.2" y="42.1" width="11.4" height="10.9" fill="#39962a"/>
<rect x="899.7" y="42.1" width="11.8" height="10.9" fill="#39962a"/>
<rect x="880.2" y="59.7" width="11.4" height="10.8" fill="#39962a"/>
<rect x="899.7" y="59.7" width="11.8" height="10.8" fill="#39962a"/>
<g fill="none" stroke="#151515" stroke-width="2.6" stroke-linejoin="bevel">
<path d="M870 77.5V95.9"/>
<path d="M878.2 95.9V77.5H883.4A5.1 5.1 0 0 1 883.4 87.7H878.2M883.4 87.7L889.2 95.9"/>
<path d="M894.3 95.9L902.2 77.8L909.8 95.9M898.4 90.8H905.6"/>
<path d="M916 95.9V77.5L927.8 95.9V77.5"/>
<path d="M934.2 88.7H941.6" stroke-width="2.2"/>
<path d="M948.8 95.9V77.5H954.3A4.4 4.4 0 0 1 954.3 86.3H948.8H955A4.8 4.8 0 0 1 955 95.9H948.8"/>
<path d="M966.4 77.5V95.9"/>
<path d="M974.2 95.9V77.5L982 92.4L989.8 77.5V95.9"/>
</g>
</svg>
<svg class="a" style="left:0;top:0" width="1024" height="577" viewBox="0 0 1024 577">
<defs><clipPath id="cv"><rect x="2" y="131" width="1009" height="414"/></clipPath>
<g id="quad"><polygon points="130.0,261.5 187.0,203.0 251.0,203.0 251.0,303.0 130.0,303.0" fill="#fca036" stroke="#9a5a14" stroke-width="0.8" />
<polygon points="48.8,85.6 176.1,212.8 137.2,251.7 9.9,124.5" fill="#cdcdcd" stroke="#555" stroke-width="0.9" />
<line x1="46.8" y1="87.5" x2="174.1" y2="214.8" stroke="#777" stroke-width="0.9" />
<line x1="11.8" y1="122.5" x2="139.1" y2="249.8" stroke="#777" stroke-width="0.9" />
<line x1="174.1" y1="214.8" x2="210.2" y2="250.9" stroke="#a86a2a" stroke-width="0.7" stroke-dasharray="3,2"/>
<line x1="139.1" y1="249.8" x2="175.9" y2="286.6" stroke="#a86a2a" stroke-width="0.7" stroke-dasharray="3,2"/>
<polygon points="147.6,164.3 222.2,238.9 213.2,247.8 138.6,173.2" fill="#d9d9d9" stroke="#444" stroke-width="0.8" />
<line x1="140.7" y1="171.1" x2="215.3" y2="245.7" stroke="#888" stroke-width="0.6" />
<polygon points="99.7,214.3 173.9,288.5 165.8,296.6 91.6,222.4" fill="#d9d9d9" stroke="#444" stroke-width="0.8" />
<line x1="97.6" y1="216.4" x2="171.8" y2="290.6" stroke="#888" stroke-width="0.6" />
<line x1="176.4" y1="212.5" x2="169.4" y2="219.6" stroke="#fff" stroke-width="1.6" />
<line x1="146.7" y1="242.2" x2="137.5" y2="251.4" stroke="#fff" stroke-width="1.6" />
<polygon points="135.3,185.7 202.2,252.5 179.8,274.9 113.0,208.0" fill="#fca036" stroke="#9a5a14" stroke-width="0.8" />
<circle cx="134.6" cy="196.4" r="3.2" fill="#2474d8" stroke="#0c2c60" stroke-width="0.9"/>
<circle cx="123.4" cy="207.5" r="3.2" fill="#2474d8" stroke="#0c2c60" stroke-width="0.9"/>
<circle cx="145.9" cy="207.7" r="3.2" fill="#2474d8" stroke="#0c2c60" stroke-width="0.9"/>
<circle cx="134.7" cy="218.8" r="3.2" fill="#2474d8" stroke="#0c2c60" stroke-width="0.9"/>
<circle cx="157.2" cy="219.0" r="3.2" fill="#1d5fb8" stroke="#0c2c60" stroke-width="0.9"/>
<circle cx="146.0" cy="230.2" r="3.2" fill="#1d5fb8" stroke="#0c2c60" stroke-width="0.9"/>
<circle cx="168.5" cy="230.3" r="3.2" fill="#1d5fb8" stroke="#0c2c60" stroke-width="0.9"/>
<circle cx="157.3" cy="241.5" r="3.2" fill="#1d5fb8" stroke="#0c2c60" stroke-width="0.9"/>
<circle cx="179.8" cy="241.6" r="3.2" fill="#1d5fb8" stroke="#0c2c60" stroke-width="0.9"/>
<circle cx="168.6" cy="252.8" r="3.2" fill="#1d5fb8" stroke="#0c2c60" stroke-width="0.9"/>
<circle cx="191.1" cy="252.9" r="3.2" fill="#1d5fb8" stroke="#0c2c60" stroke-width="0.9"/>
<circle cx="180.0" cy="264.1" r="3.2" fill="#1d5fb8" stroke="#0c2c60" stroke-width="0.9"/>
<rect x="235.5" y="216.5" width="14" height="77" fill="#d9d9d9" stroke="#444" stroke-width="0.8"/>
<line x1="248.2" y1="216.5" x2="248.2" y2="293.5" stroke="#555" stroke-width="1.2" />
<circle cx="243.0" cy="221.8" r="2.9" fill="#2474d8" stroke="#0c2c60" stroke-width="0.9"/>
<circle cx="243.0" cy="238.3" r="2.9" fill="#2474d8" stroke="#0c2c60" stroke-width="0.9"/>
<circle cx="243.0" cy="254.6" r="2.9" fill="#2474d8" stroke="#0c2c60" stroke-width="0.9"/>
<circle cx="243.0" cy="270.8" r="2.9" fill="#2474d8" stroke="#0c2c60" stroke-width="0.9"/>
<circle cx="243.0" cy="286.9" r="2.9" fill="#2474d8" stroke="#0c2c60" stroke-width="0.9"/></g><g id="qb"><circle cx="186.1" cy="209.9" r="2.6" fill="#2474d8" stroke="#0c2c60" stroke-width="0.9"/><circle cx="196.0" cy="219.8" r="2.6" fill="#2474d8" stroke="#0c2c60" stroke-width="0.9"/><circle cx="205.9" cy="229.7" r="2.6" fill="#2474d8" stroke="#0c2c60" stroke-width="0.9"/><circle cx="215.8" cy="239.6" r="2.6" fill="#2474d8" stroke="#0c2c60" stroke-width="0.9"/><circle cx="138.1" cy="260.0" r="2.6" fill="#2474d8" stroke="#0c2c60" stroke-width="0.9"/><circle cx="147.9" cy="269.8" r="2.6" fill="#2474d8" stroke="#0c2c60" stroke-width="0.9"/><circle cx="157.6" cy="279.5" r="2.6" fill="#2474d8" stroke="#0c2c60" stroke-width="0.9"/><circle cx="167.9" cy="289.8" r="2.6" fill="#2474d8" stroke="#0c2c60" stroke-width="0.9"/></g></defs>
<g clip-path="url(#cv)">
<use href="#quad"/>
<use href="#quad" transform="translate(586.6,0) scale(-1,1)"/>
<use href="#qb"/>
<use href="#qb" transform="translate(586.6,0) scale(-1,1)"/>
<use href="#quad" transform="translate(0,723.5) scale(1,-1)"/>
<use href="#quad" transform="translate(586.6,723.5) scale(-1,-1)"/>
<rect x="1" y="303.3" width="251.7" height="116.1" fill="#cdcdcd" stroke="#666" stroke-width="0.8"/>
<rect x="1" y="303.7" width="251.7" height="2.3" fill="#d8d8d8"/>
<line x1="1.0" y1="306.9" x2="252.7" y2="306.9" stroke="#5a5a5a" stroke-width="2.2" />
<line x1="1.0" y1="415.6" x2="252.7" y2="415.6" stroke="#5a5a5a" stroke-width="2.2" />
<rect x="1" y="416.8" width="251.7" height="2.6" fill="#d8d8d8"/>
<rect x="334" y="303.3" width="242" height="116.1" fill="#cdcdcd" stroke="#666" stroke-width="0.8"/>
<rect x="334" y="303.7" width="242" height="2.3" fill="#d8d8d8"/>
<line x1="334.0" y1="306.9" x2="576.0" y2="306.9" stroke="#5a5a5a" stroke-width="2.2" />
<line x1="334.0" y1="415.6" x2="576.0" y2="415.6" stroke="#5a5a5a" stroke-width="2.2" />
<rect x="334" y="416.8" width="242" height="2.6" fill="#d8d8d8"/>
<line x1="576.0" y1="303.3" x2="576.0" y2="419.4" stroke="#666" stroke-width="1.0" />
<rect x="252.7" y="120" width="81.3" height="440" fill="#cdcdcd"/>
<rect x="252.7" y="120" width="2.3" height="440" fill="#a9a9a9"/>
<rect x="256" y="120" width="2.2" height="440" fill="#959595"/>
<rect x="258.2" y="120" width="1.2" height="440" fill="#e2e2e2"/>
<rect x="329" y="120" width="2.2" height="440" fill="#7a7a7a"/>
<rect x="332" y="120" width="2" height="440" fill="#8a8a8a"/>
<rect x="234.7" y="315.5" width="17.5" height="93" fill="#d9d9d9" stroke="#555" stroke-width="0.8"/>
<rect x="334.5" y="315.5" width="17.5" height="93" fill="#d9d9d9" stroke="#555" stroke-width="0.8"/>
<line x1="250.6" y1="315.5" x2="250.6" y2="408.5" stroke="#666" stroke-width="1.2" />
<line x1="336.1" y1="315.5" x2="336.1" y2="408.5" stroke="#666" stroke-width="1.2" />
<circle cx="242.5" cy="321.6" r="3.0" fill="#2474d8" stroke="#0c2c60" stroke-width="0.9"/>
<circle cx="344.0" cy="321.6" r="3.0" fill="#2474d8" stroke="#0c2c60" stroke-width="0.9"/>
<rect x="251.5" y="318.6" width="3.6" height="6" fill="#174a9a" stroke="#0c2c60" stroke-width="0.6"/>
<circle cx="259.8" cy="321.6" r="3.0" fill="#1d5fb8" stroke="#0c2c60" stroke-width="0.9"/>
<rect x="331.8" y="318.6" width="3.6" height="6" fill="#174a9a" stroke="#0c2c60" stroke-width="0.6"/>
<circle cx="326.8" cy="321.6" r="3.0" fill="#1d5fb8" stroke="#0c2c60" stroke-width="0.9"/>
<circle cx="242.5" cy="337.8" r="3.0" fill="#2474d8" stroke="#0c2c60" stroke-width="0.9"/>
<circle cx="344.0" cy="337.8" r="3.0" fill="#2474d8" stroke="#0c2c60" stroke-width="0.9"/>
<rect x="251.5" y="334.8" width="3.6" height="6" fill="#174a9a" stroke="#0c2c60" stroke-width="0.6"/>
<circle cx="259.8" cy="337.8" r="3.0" fill="#1d5fb8" stroke="#0c2c60" stroke-width="0.9"/>
<rect x="331.8" y="334.8" width="3.6" height="6" fill="#174a9a" stroke="#0c2c60" stroke-width="0.6"/>
<circle cx="326.8" cy="337.8" r="3.0" fill="#1d5fb8" stroke="#0c2c60" stroke-width="0.9"/>
<circle cx="242.5" cy="353.9" r="3.0" fill="#2474d8" stroke="#0c2c60" stroke-width="0.9"/>
<circle cx="344.0" cy="353.9" r="3.0" fill="#2474d8" stroke="#0c2c60" stroke-width="0.9"/>
<rect x="251.5" y="350.9" width="3.6" height="6" fill="#174a9a" stroke="#0c2c60" stroke-width="0.6"/>
<circle cx="259.8" cy="353.9" r="3.0" fill="#1d5fb8" stroke="#0c2c60" stroke-width="0.9"/>
<rect x="331.8" y="350.9" width="3.6" height="6" fill="#174a9a" stroke="#0c2c60" stroke-width="0.6"/>
<circle cx="326.8" cy="353.9" r="3.0" fill="#1d5fb8" stroke="#0c2c60" stroke-width="0.9"/>
<circle cx="242.5" cy="370.1" r="3.0" fill="#2474d8" stroke="#0c2c60" stroke-width="0.9"/>
<circle cx="344.0" cy="370.1" r="3.0" fill="#2474d8" stroke="#0c2c60" stroke-width="0.9"/>
<rect x="251.5" y="367.1" width="3.6" height="6" fill="#174a9a" stroke="#0c2c60" stroke-width="0.6"/>
<circle cx="259.8" cy="370.1" r="3.0" fill="#1d5fb8" stroke="#0c2c60" stroke-width="0.9"/>
<rect x="331.8" y="367.1" width="3.6" height="6" fill="#174a9a" stroke="#0c2c60" stroke-width="0.6"/>
<circle cx="326.8" cy="370.1" r="3.0" fill="#1d5fb8" stroke="#0c2c60" stroke-width="0.9"/>
<circle cx="242.5" cy="386.1" r="3.0" fill="#2474d8" stroke="#0c2c60" stroke-width="0.9"/>
<circle cx="344.0" cy="386.1" r="3.0" fill="#2474d8" stroke="#0c2c60" stroke-width="0.9"/>
<rect x="251.5" y="383.1" width="3.6" height="6" fill="#174a9a" stroke="#0c2c60" stroke-width="0.6"/>
<circle cx="259.8" cy="386.1" r="3.0" fill="#1d5fb8" stroke="#0c2c60" stroke-width="0.9"/>
<rect x="331.8" y="383.1" width="3.6" height="6" fill="#174a9a" stroke="#0c2c60" stroke-width="0.6"/>
<circle cx="326.8" cy="386.1" r="3.0" fill="#1d5fb8" stroke="#0c2c60" stroke-width="0.9"/>
<circle cx="242.5" cy="402.2" r="3.0" fill="#2474d8" stroke="#0c2c60" stroke-width="0.9"/>
<circle cx="344.0" cy="402.2" r="3.0" fill="#2474d8" stroke="#0c2c60" stroke-width="0.9"/>
<rect x="251.5" y="399.2" width="3.6" height="6" fill="#174a9a" stroke="#0c2c60" stroke-width="0.6"/>
<circle cx="259.8" cy="402.2" r="3.0" fill="#1d5fb8" stroke="#0c2c60" stroke-width="0.9"/>
<rect x="331.8" y="399.2" width="3.6" height="6" fill="#174a9a" stroke="#0c2c60" stroke-width="0.6"/>
<circle cx="326.8" cy="402.2" r="3.0" fill="#1d5fb8" stroke="#0c2c60" stroke-width="0.9"/>
</g>
<g clip-path="url(#cv)"><line x1="243.4" y1="164.4" x2="243.4" y2="216.5" stroke="#222" stroke-width="0.8"/>
<line x1="343.4" y1="164.4" x2="343.4" y2="216.5" stroke="#222" stroke-width="0.8"/>
<line x1="243.4" y1="171.2" x2="343.4" y2="171.2" stroke="#222" stroke-width="0.8"/>
<polygon points="243.4,171.2 252.9,173.0 252.9,169.4" fill="#111"/>
<polygon points="343.4,171.2 333.9,169.4 333.9,173.0" fill="#111"/>
<g transform="translate(292.9,161.0) rotate(0)"><rect x="-21.2" y="-5.4" width="42.5" height="10.8" fill="#fff"/><text x="0" y="3.67" text-anchor="middle" font-family="Liberation Sans" font-size="10.2" font-weight="bold" fill="#222" stroke="#222" stroke-width="0" textLength="41.5" lengthAdjust="spacingAndGlyphs" xml:space="preserve">2' - 7 1/4&quot;</text></g>
<g transform="translate(399.2,151.3) rotate(0)"><text x="0" y="3.67" text-anchor="middle" font-family="Liberation Sans" font-size="10.2" fill="#333" stroke="#333" stroke-width="0.45" textLength="120" lengthAdjust="spacingAndGlyphs" xml:space="preserve">GUSSET PL.  Thk = 0' - 1&quot;</text></g>
<line x1="399.7" y1="164.3" x2="369.6" y2="164.3" stroke="#222" stroke-width="0.8"/>
<line x1="369.6" y1="164.3" x2="354.3" y2="202.2" stroke="#222" stroke-width="0.8"/>
<polygon points="354.3,202.2 359.9,193.7 356.2,192.2" fill="#111"/>
<g transform="translate(39.6,293.2) rotate(0)"><text x="0" y="3.67" text-anchor="middle" font-family="Liberation Sans" font-size="10.2" fill="#333" stroke="#333" stroke-width="0.45" textLength="44.7" lengthAdjust="spacingAndGlyphs" xml:space="preserve">W36X182</text></g>
<g transform="translate(519.8,293.5) rotate(0)"><text x="0" y="3.67" text-anchor="middle" font-family="Liberation Sans" font-size="10.2" fill="#333" stroke="#333" stroke-width="0.45" textLength="44.2" lengthAdjust="spacingAndGlyphs" xml:space="preserve">W36X182</text></g>
<g transform="translate(226.2,361.6) rotate(-90)"><text x="0" y="3.60" text-anchor="middle" font-family="Liberation Sans" font-size="10" fill="#333" stroke="#333" stroke-width="0.45" textLength="43.7" lengthAdjust="spacingAndGlyphs" xml:space="preserve">L6X6X1/2</text></g>
<g transform="translate(293.5,362.2) rotate(-90)"><text x="0" y="3.60" text-anchor="middle" font-family="Liberation Sans" font-size="10" fill="#333" stroke="#333" stroke-width="0.45" textLength="45" lengthAdjust="spacingAndGlyphs" xml:space="preserve">W24X131</text></g>
<line x1="350.6" y1="321.6" x2="391.9" y2="321.6" stroke="#333" stroke-width="0.8"/>
<line x1="350.6" y1="337.8" x2="391.9" y2="337.8" stroke="#333" stroke-width="0.8"/>
<line x1="350.6" y1="353.9" x2="391.9" y2="353.9" stroke="#333" stroke-width="0.8"/>
<line x1="350.6" y1="370.1" x2="391.9" y2="370.1" stroke="#333" stroke-width="0.8"/>
<line x1="350.6" y1="386.1" x2="391.9" y2="386.1" stroke="#333" stroke-width="0.8"/>
<line x1="350.6" y1="402.2" x2="391.9" y2="402.2" stroke="#333" stroke-width="0.8"/>
<line x1="384.6" y1="304.6" x2="384.6" y2="418.6" stroke="#222" stroke-width="0.8"/>
<polygon points="384.6,321.6 386.4,312.6 382.8,312.6" fill="#111"/>
<polygon points="384.6,402.2 382.8,411.2 386.4,411.2" fill="#111"/>
<line x1="380.5" y1="333.8" x2="388.7" y2="341.8" stroke="#333" stroke-width="0.7"/>
<line x1="380.5" y1="349.9" x2="388.7" y2="357.9" stroke="#333" stroke-width="0.7"/>
<line x1="380.5" y1="366.1" x2="388.7" y2="374.1" stroke="#333" stroke-width="0.7"/>
<line x1="380.5" y1="382.1" x2="388.7" y2="390.1" stroke="#333" stroke-width="0.7"/>
<g transform="translate(374.9,361.5) rotate(-90)"><rect x="-13.3" y="-6.1" width="26.7" height="12.2" fill="#fff"/><text x="0" y="3.60" text-anchor="middle" font-family="Liberation Sans" font-size="10" fill="#222" stroke="#222" stroke-width="0.45" textLength="25.5" lengthAdjust="spacingAndGlyphs" xml:space="preserve">2' - 1&quot;</text></g>
<line x1="463.2" y1="207.5" x2="506.0" y2="250.3" stroke="#333" stroke-width="0.7"/>
<line x1="451.9" y1="218.8" x2="494.7" y2="261.6" stroke="#333" stroke-width="0.7"/>
<line x1="440.6" y1="230.2" x2="483.4" y2="272.9" stroke="#333" stroke-width="0.7"/>
<line x1="429.3" y1="241.5" x2="472.0" y2="284.3" stroke="#333" stroke-width="0.7"/>
<line x1="418.0" y1="252.8" x2="460.7" y2="295.6" stroke="#333" stroke-width="0.7"/>
<line x1="406.6" y1="264.1" x2="449.4" y2="306.9" stroke="#333" stroke-width="0.7"/>
<line x1="513.1" y1="234.8" x2="432.5" y2="315.4" stroke="#222" stroke-width="0.8"/>
<polygon points="501.7,246.1 509.4,241.0 506.8,238.4" fill="#111"/>
<polygon points="445.2,302.6 437.5,307.7 440.1,310.3" fill="#111"/>
<line x1="484.9" y1="257.4" x2="495.9" y2="257.4" stroke="#333" stroke-width="0.7"/>
<line x1="473.6" y1="268.7" x2="484.6" y2="268.7" stroke="#333" stroke-width="0.7"/>
<line x1="462.3" y1="280.0" x2="473.3" y2="280.0" stroke="#333" stroke-width="0.7"/>
<line x1="451.0" y1="291.3" x2="462.0" y2="291.3" stroke="#333" stroke-width="0.7"/>
<g transform="translate(465.5,268.9) rotate(-45)"><rect x="-13.2" y="-5.8" width="26.5" height="11.5" fill="#fff"/><text x="0" y="3.60" text-anchor="middle" font-family="Liberation Sans" font-size="10" fill="#222" stroke="#222" stroke-width="0.45" textLength="25.5" lengthAdjust="spacingAndGlyphs" xml:space="preserve">2' - 1&quot;</text></g>
<line x1="474.1" y1="176.0" x2="458.2" y2="191.9" stroke="#333" stroke-width="0.7"/>
<line x1="485.9" y1="187.8" x2="470.0" y2="203.7" stroke="#333" stroke-width="0.7"/>
<line x1="463.2" y1="163.0" x2="497.9" y2="197.6" stroke="#222" stroke-width="0.8"/>
<polygon points="475.2,174.9 470.1,167.3 467.5,169.8" fill="#111"/>
<polygon points="487.0,186.7 492.1,194.4 494.6,191.8" fill="#111"/>
<g transform="translate(486.9,174.7) rotate(45)"><rect x="-15.0" y="-5.8" width="30.0" height="11.5" fill="#fff"/><text x="0" y="3.60" text-anchor="middle" font-family="Liberation Sans" font-size="10" fill="#222" stroke="#222" stroke-width="0.45" textLength="25.5" lengthAdjust="spacingAndGlyphs" xml:space="preserve">0' - 5&quot;</text></g>
<line x1="463.2" y1="516.0" x2="507.4" y2="471.8" stroke="#333" stroke-width="0.7"/>
<line x1="451.9" y1="504.7" x2="496.1" y2="460.5" stroke="#333" stroke-width="0.7"/>
<line x1="440.6" y1="493.3" x2="484.8" y2="449.1" stroke="#333" stroke-width="0.7"/>
<line x1="429.3" y1="482.0" x2="473.5" y2="437.8" stroke="#333" stroke-width="0.7"/>
<line x1="418.0" y1="470.7" x2="462.1" y2="426.5" stroke="#333" stroke-width="0.7"/>
<line x1="406.6" y1="459.4" x2="450.8" y2="415.2" stroke="#333" stroke-width="0.7"/>
<line x1="514.8" y1="487.0" x2="434.2" y2="406.4" stroke="#222" stroke-width="0.8"/>
<polygon points="503.5,475.7 508.6,483.3 511.2,480.8" fill="#111"/>
<polygon points="446.9,419.1 441.9,411.5 439.3,414.0" fill="#111"/>
<line x1="486.7" y1="464.3" x2="497.7" y2="464.3" stroke="#333" stroke-width="0.7"/>
<line x1="475.4" y1="453.0" x2="486.4" y2="453.0" stroke="#333" stroke-width="0.7"/>
<line x1="464.1" y1="441.7" x2="475.1" y2="441.7" stroke="#333" stroke-width="0.7"/>
<line x1="452.8" y1="430.4" x2="463.8" y2="430.4" stroke="#333" stroke-width="0.7"/>
<g transform="translate(482.3,440.3) rotate(45)"><rect x="-13.5" y="-5.8" width="27.0" height="11.5" fill="#fff"/><text x="0" y="3.60" text-anchor="middle" font-family="Liberation Sans" font-size="10" fill="#222" stroke="#222" stroke-width="0.45" textLength="25.5" lengthAdjust="spacingAndGlyphs" xml:space="preserve">2' - 1&quot;</text></g></g>
</svg>
<div class="a" style="left:0;top:131px;width:1011px;height:414px;overflow:hidden;pointer-events:none">
<div class="a" style="left:663.3px;top:11.0px;width:310.2px;height:45.0px;border:1px solid #3a3a3a;background:#fff"></div>
<div class="a" style="left:663.3px;top:43.0px;width:310.2px;height:1.0px;background:#3a3a3a"></div>
<div class="a" style="left:740.5px;top:43.0px;width:1.0px;height:12.0px;background:#3a3a3a"></div>
<div class="a" style="left:818.7px;top:43.0px;width:1.0px;height:12.0px;background:#3a3a3a"></div>
<div class="a" style="left:895.1px;top:43.0px;width:1.0px;height:12.0px;background:#3a3a3a"></div>
<div class="a" style="left:663.3px;top:19px;width:309.2px;text-align:center;font-weight:bold;font-size:13.4px;color:#111;letter-spacing:0.2px">Bolt Schedule</div>
<div class="a" style="left:663.3px;top:44.2px;width:77.2px;text-align:center;font-size:8.6px;color:#555">Diameter</div>
<div class="a" style="left:740.5px;top:44.2px;width:78.2px;text-align:center;font-size:8.6px;color:#555">Grade</div>
<div class="a" style="left:818.7px;top:44.2px;width:76.4px;text-align:center;font-size:8.6px;color:#555">Number</div>
<div class="a" style="left:895.1px;top:44.2px;width:77.4px;text-align:center;font-size:8.6px;color:#555">Standard</div>
<div class="a" style="left:663.3px;top:74.3px;width:310.2px;height:342.6px;border:1px solid #3a3a3a;border-bottom:none"></div>
<div class="a" style="left:663.3px;top:86.5px;width:310.2px;height:1.0px;background:#3a3a3a"></div>
<div class="a" style="left:663.3px;top:98.6px;width:310.2px;height:1.0px;background:#3a3a3a"></div>
<div class="a" style="left:663.3px;top:110.8px;width:310.2px;height:1.0px;background:#3a3a3a"></div>
<div class="a" style="left:663.3px;top:123.0px;width:310.2px;height:1.0px;background:#3a3a3a"></div>
<div class="a" style="left:663.3px;top:135.1px;width:310.2px;height:1.0px;background:#3a3a3a"></div>
<div class="a" style="left:663.3px;top:147.3px;width:310.2px;height:1.0px;background:#3a3a3a"></div>
<div class="a" style="left:663.3px;top:159.5px;width:310.2px;height:1.0px;background:#3a3a3a"></div>
<div class="a" style="left:663.3px;top:171.6px;width:310.2px;height:1.0px;background:#3a3a3a"></div>
<div class="a" style="left:663.3px;top:183.8px;width:310.2px;height:1.0px;background:#3a3a3a"></div>
<div class="a" style="left:663.3px;top:195.9px;width:310.2px;height:1.0px;background:#3a3a3a"></div>
<div class="a" style="left:663.3px;top:208.1px;width:310.2px;height:1.0px;background:#3a3a3a"></div>
<div class="a" style="left:663.3px;top:220.3px;width:310.2px;height:1.0px;background:#3a3a3a"></div>
<div class="a" style="left:663.3px;top:232.4px;width:310.2px;height:1.0px;background:#3a3a3a"></div>
<div class="a" style="left:663.3px;top:244.6px;width:310.2px;height:1.0px;background:#3a3a3a"></div>
<div class="a" style="left:663.3px;top:256.8px;width:310.2px;height:1.0px;background:#3a3a3a"></div>
<div class="a" style="left:663.3px;top:268.9px;width:310.2px;height:1.0px;background:#3a3a3a"></div>
<div class="a" style="left:663.3px;top:281.1px;width:310.2px;height:1.0px;background:#3a3a3a"></div>
<div class="a" style="left:663.3px;top:293.3px;width:310.2px;height:1.0px;background:#3a3a3a"></div>
<div class="a" style="left:663.3px;top:305.4px;width:310.2px;height:1.0px;background:#3a3a3a"></div>
<div class="a" style="left:663.3px;top:317.6px;width:310.2px;height:1.0px;background:#3a3a3a"></div>
<div class="a" style="left:663.3px;top:329.8px;width:310.2px;height:1.0px;background:#3a3a3a"></div>
<div class="a" style="left:663.3px;top:341.9px;width:310.2px;height:1.0px;background:#3a3a3a"></div>
<div class="a" style="left:663.3px;top:354.1px;width:310.2px;height:1.0px;background:#3a3a3a"></div>
<div class="a" style="left:663.3px;top:366.3px;width:310.2px;height:1.0px;background:#3a3a3a"></div>
<div class="a" style="left:663.3px;top:378.4px;width:310.2px;height:1.0px;background:#3a3a3a"></div>
<div class="a" style="left:663.3px;top:390.6px;width:310.2px;height:1.0px;background:#3a3a3a"></div>
<div class="a" style="left:663.3px;top:402.8px;width:310.2px;height:1.0px;background:#3a3a3a"></div>
<div class="a" style="left:740.5px;top:74.3px;width:1.0px;height:342.6px;background:#3a3a3a"></div>
<div class="a" style="left:818.7px;top:74.3px;width:1.0px;height:342.6px;background:#3a3a3a"></div>
<div class="a" style="left:895.1px;top:74.3px;width:1.0px;height:342.6px;background:#3a3a3a"></div>
<div class="a" style="left:668.8px;top:74.5px;font-size:9px;color:#555;letter-spacing:-0.2px">1 inch</div>
<div class="a" style="left:743.5px;top:74.5px;font-size:9px;color:#555;letter-spacing:-0.2px">10.9</div>
<div class="a" style="left:820.2px;top:74.5px;font-size:9px;color:#555;letter-spacing:-0.2px">6</div>
<div class="a" style="left:896.6px;top:74.5px;font-size:9px;color:#555;letter-spacing:-0.2px">A325</div>
<div class="a" style="left:668.8px;top:86.7px;font-size:9px;color:#555;letter-spacing:-0.2px">1 1/4 inch</div>
<div class="a" style="left:743.5px;top:86.7px;font-size:9px;color:#555;letter-spacing:-0.2px">10.9</div>
<div class="a" style="left:820.2px;top:86.7px;font-size:9px;color:#555;letter-spacing:-0.2px">6</div>
<div class="a" style="left:896.6px;top:86.7px;font-size:9px;color:#555;letter-spacing:-0.2px">A325</div>
<div class="a" style="left:668.8px;top:98.8px;font-size:9px;color:#555;letter-spacing:-0.2px">1 inch</div>
<div class="a" style="left:743.5px;top:98.8px;font-size:9px;color:#555;letter-spacing:-0.2px">10.9</div>
<div class="a" style="left:820.2px;top:98.8px;font-size:9px;color:#555;letter-spacing:-0.2px">6</div>
<div class="a" style="left:896.6px;top:98.8px;font-size:9px;color:#555;letter-spacing:-0.2px">A325</div>
<div class="a" style="left:668.8px;top:111.0px;font-size:9px;color:#555;letter-spacing:-0.2px">1 inch</div>
<div class="a" style="left:743.5px;top:111.0px;font-size:9px;color:#555;letter-spacing:-0.2px">10.9</div>
<div class="a" style="left:820.2px;top:111.0px;font-size:9px;color:#555;letter-spacing:-0.2px">6</div>
<div class="a" style="left:896.6px;top:111.0px;font-size:9px;color:#555;letter-spacing:-0.2px">A325</div>
<div class="a" style="left:668.8px;top:123.2px;font-size:9px;color:#555;letter-spacing:-0.2px">1 1/4 inch</div>
<div class="a" style="left:743.5px;top:123.2px;font-size:9px;color:#555;letter-spacing:-0.2px">10.9</div>
<div class="a" style="left:820.2px;top:123.2px;font-size:9px;color:#555;letter-spacing:-0.2px">6</div>
<div class="a" style="left:896.6px;top:123.2px;font-size:9px;color:#555;letter-spacing:-0.2px">A325</div>
<div class="a" style="left:668.8px;top:135.3px;font-size:9px;color:#555;letter-spacing:-0.2px">1 inch</div>
<div class="a" style="left:743.5px;top:135.3px;font-size:9px;color:#555;letter-spacing:-0.2px">10.9</div>
<div class="a" style="left:820.2px;top:135.3px;font-size:9px;color:#555;letter-spacing:-0.2px">6</div>
<div class="a" style="left:896.6px;top:135.3px;font-size:9px;color:#555;letter-spacing:-0.2px">A325</div>
<div class="a" style="left:668.8px;top:147.5px;font-size:9px;color:#555;letter-spacing:-0.2px">1 1/4 inch</div>
<div class="a" style="left:743.5px;top:147.5px;font-size:9px;color:#555;letter-spacing:-0.2px">10.9</div>
<div class="a" style="left:820.2px;top:147.5px;font-size:9px;color:#555;letter-spacing:-0.2px">6</div>
<div class="a" style="left:896.6px;top:147.5px;font-size:9px;color:#555;letter-spacing:-0.2px">A325</div>
<div class="a" style="left:668.8px;top:159.7px;font-size:9px;color:#555;letter-spacing:-0.2px">1 1/4 inch</div>
<div class="a" style="left:743.5px;top:159.7px;font-size:9px;color:#555;letter-spacing:-0.2px">10.9</div>
<div class="a" style="left:820.2px;top:159.7px;font-size:9px;color:#555;letter-spacing:-0.2px">6</div>
<div class="a" style="left:896.6px;top:159.7px;font-size:9px;color:#555;letter-spacing:-0.2px">A325</div>
<div class="a" style="left:668.8px;top:171.8px;font-size:9px;color:#555;letter-spacing:-0.2px">1 inch</div>
<div class="a" style="left:743.5px;top:171.8px;font-size:9px;color:#555;letter-spacing:-0.2px">10.9</div>
<div class="a" style="left:820.2px;top:171.8px;font-size:9px;color:#555;letter-spacing:-0.2px">6</div>
<div class="a" style="left:896.6px;top:171.8px;font-size:9px;color:#555;letter-spacing:-0.2px">A325</div>
<div class="a" style="left:668.8px;top:184.0px;font-size:9px;color:#555;letter-spacing:-0.2px">1 inch</div>
<div class="a" style="left:743.5px;top:184.0px;font-size:9px;color:#555;letter-spacing:-0.2px">10.9</div>
<div class="a" style="left:820.2px;top:184.0px;font-size:9px;color:#555;letter-spacing:-0.2px">6</div>
<div class="a" style="left:896.6px;top:184.0px;font-size:9px;color:#555;letter-spacing:-0.2px">A325</div>
<div class="a" style="left:668.8px;top:196.1px;font-size:9px;color:#555;letter-spacing:-0.2px">1 1/4 inch</div>
<div class="a" style="left:743.5px;top:196.1px;font-size:9px;color:#555;letter-spacing:-0.2px">10.9</div>
<div class="a" style="left:820.2px;top:196.1px;font-size:9px;color:#555;letter-spacing:-0.2px">6</div>
<div class="a" style="left:896.6px;top:196.1px;font-size:9px;color:#555;letter-spacing:-0.2px">A325</div>
<div class="a" style="left:668.8px;top:208.3px;font-size:9px;color:#555;letter-spacing:-0.2px">1 1/4 inch</div>
<div class="a" style="left:743.5px;top:208.3px;font-size:9px;color:#555;letter-spacing:-0.2px">10.9</div>
<div class="a" style="left:820.2px;top:208.3px;font-size:9px;color:#555;letter-spacing:-0.2px">6</div>
<div class="a" style="left:896.6px;top:208.3px;font-size:9px;color:#555;letter-spacing:-0.2px">A325</div>
<div class="a" style="left:668.8px;top:220.5px;font-size:9px;color:#555;letter-spacing:-0.2px">1 inch</div>
<div class="a" style="left:743.5px;top:220.5px;font-size:9px;color:#555;letter-spacing:-0.2px">10.9</div>
<div class="a" style="left:820.2px;top:220.5px;font-size:9px;color:#555;letter-spacing:-0.2px">6</div>
<div class="a" style="left:896.6px;top:220.5px;font-size:9px;color:#555;letter-spacing:-0.2px">A325</div>
<div class="a" style="left:668.8px;top:232.6px;font-size:9px;color:#555;letter-spacing:-0.2px">1 1/4 inch</div>
<div class="a" style="left:743.5px;top:232.6px;font-size:9px;color:#555;letter-spacing:-0.2px">10.9</div>
<div class="a" style="left:820.2px;top:232.6px;font-size:9px;color:#555;letter-spacing:-0.2px">6</div>
<div class="a" style="left:896.6px;top:232.6px;font-size:9px;color:#555;letter-spacing:-0.2px">A325</div>
<div class="a" style="left:668.8px;top:244.8px;font-size:9px;color:#555;letter-spacing:-0.2px">1 1/4 inch</div>
<div class="a" style="left:743.5px;top:244.8px;font-size:9px;color:#555;letter-spacing:-0.2px">10.9</div>
<div class="a" style="left:820.2px;top:244.8px;font-size:9px;color:#555;letter-spacing:-0.2px">6</div>
<div class="a" style="left:896.6px;top:244.8px;font-size:9px;color:#555;letter-spacing:-0.2px">A325</div>
<div class="a" style="left:668.8px;top:257.0px;font-size:9px;color:#555;letter-spacing:-0.2px">1 inch</div>
<div class="a" style="left:743.5px;top:257.0px;font-size:9px;color:#555;letter-spacing:-0.2px">10.9</div>
<div class="a" style="left:820.2px;top:257.0px;font-size:9px;color:#555;letter-spacing:-0.2px">6</div>
<div class="a" style="left:896.6px;top:257.0px;font-size:9px;color:#555;letter-spacing:-0.2px">A325</div>
<div class="a" style="left:668.8px;top:269.1px;font-size:9px;color:#555;letter-spacing:-0.2px">1 1/8 inch</div>
<div class="a" style="left:743.5px;top:269.1px;font-size:9px;color:#555;letter-spacing:-0.2px">10.9</div>
<div class="a" style="left:820.2px;top:269.1px;font-size:9px;color:#555;letter-spacing:-0.2px">6</div>
<div class="a" style="left:896.6px;top:269.1px;font-size:9px;color:#555;letter-spacing:-0.2px">A325</div>
<div class="a" style="left:668.8px;top:281.3px;font-size:9px;color:#555;letter-spacing:-0.2px">1 1/8 inch</div>
<div class="a" style="left:743.5px;top:281.3px;font-size:9px;color:#555;letter-spacing:-0.2px">10.9</div>
<div class="a" style="left:820.2px;top:281.3px;font-size:9px;color:#555;letter-spacing:-0.2px">6</div>
<div class="a" style="left:896.6px;top:281.3px;font-size:9px;color:#555;letter-spacing:-0.2px">A325</div>
<div class="a" style="left:668.8px;top:293.5px;font-size:9px;color:#555;letter-spacing:-0.2px">1 1/8 inch</div>
<div class="a" style="left:743.5px;top:293.5px;font-size:9px;color:#555;letter-spacing:-0.2px">10.9</div>
<div class="a" style="left:820.2px;top:293.5px;font-size:9px;color:#555;letter-spacing:-0.2px">6</div>
<div class="a" style="left:896.6px;top:293.5px;font-size:9px;color:#555;letter-spacing:-0.2px">A325</div>
<div class="a" style="left:668.8px;top:305.6px;font-size:9px;color:#555;letter-spacing:-0.2px">1 1/8 inch</div>
<div class="a" style="left:743.5px;top:305.6px;font-size:9px;color:#555;letter-spacing:-0.2px">10.9</div>
<div class="a" style="left:820.2px;top:305.6px;font-size:9px;color:#555;letter-spacing:-0.2px">6</div>
<div class="a" style="left:896.6px;top:305.6px;font-size:9px;color:#555;letter-spacing:-0.2px">A325</div>
<div class="a" style="left:668.8px;top:317.8px;font-size:9px;color:#555;letter-spacing:-0.2px">1 1/8 inch</div>
<div class="a" style="left:743.5px;top:317.8px;font-size:9px;color:#555;letter-spacing:-0.2px">10.9</div>
<div class="a" style="left:820.2px;top:317.8px;font-size:9px;color:#555;letter-spacing:-0.2px">6</div>
<div class="a" style="left:896.6px;top:317.8px;font-size:9px;color:#555;letter-spacing:-0.2px">A325</div>
<div class="a" style="left:668.8px;top:330.0px;font-size:9px;color:#555;letter-spacing:-0.2px">1 1/8 inch</div>
<div class="a" style="left:743.5px;top:330.0px;font-size:9px;color:#555;letter-spacing:-0.2px">10.9</div>
<div class="a" style="left:820.2px;top:330.0px;font-size:9px;color:#555;letter-spacing:-0.2px">6</div>
<div class="a" style="left:896.6px;top:330.0px;font-size:9px;color:#555;letter-spacing:-0.2px">A325</div>
<div class="a" style="left:668.8px;top:342.1px;font-size:9px;color:#555;letter-spacing:-0.2px">1 inch</div>
<div class="a" style="left:743.5px;top:342.1px;font-size:9px;color:#555;letter-spacing:-0.2px">10.9</div>
<div class="a" style="left:820.2px;top:342.1px;font-size:9px;color:#555;letter-spacing:-0.2px">5</div>
<div class="a" style="left:896.6px;top:342.1px;font-size:9px;color:#555;letter-spacing:-0.2px">A325</div>
<div class="a" style="left:668.8px;top:354.3px;font-size:9px;color:#555;letter-spacing:-0.2px">1 inch</div>
<div class="a" style="left:743.5px;top:354.3px;font-size:9px;color:#555;letter-spacing:-0.2px">10.9</div>
<div class="a" style="left:820.2px;top:354.3px;font-size:9px;color:#555;letter-spacing:-0.2px">5</div>
<div class="a" style="left:896.6px;top:354.3px;font-size:9px;color:#555;letter-spacing:-0.2px">A325</div>
<div class="a" style="left:668.8px;top:366.5px;font-size:9px;color:#555;letter-spacing:-0.2px">1 inch</div>
<div class="a" style="left:743.5px;top:366.5px;font-size:9px;color:#555;letter-spacing:-0.2px">10.9</div>
<div class="a" style="left:820.2px;top:366.5px;font-size:9px;color:#555;letter-spacing:-0.2px">5</div>
<div class="a" style="left:896.6px;top:366.5px;font-size:9px;color:#555;letter-spacing:-0.2px">A325</div>
<div class="a" style="left:668.8px;top:378.6px;font-size:9px;color:#555;letter-spacing:-0.2px">1 inch</div>
<div class="a" style="left:743.5px;top:378.6px;font-size:9px;color:#555;letter-spacing:-0.2px">10.9</div>
<div class="a" style="left:820.2px;top:378.6px;font-size:9px;color:#555;letter-spacing:-0.2px">5</div>
<div class="a" style="left:896.6px;top:378.6px;font-size:9px;color:#555;letter-spacing:-0.2px">A325</div>
<div class="a" style="left:668.8px;top:390.8px;font-size:9px;color:#555;letter-spacing:-0.2px">3/4 inch</div>
<div class="a" style="left:743.5px;top:390.8px;font-size:9px;color:#555;letter-spacing:-0.2px">10.9</div>
<div class="a" style="left:820.2px;top:390.8px;font-size:9px;color:#555;letter-spacing:-0.2px">4</div>
<div class="a" style="left:896.6px;top:390.8px;font-size:9px;color:#555;letter-spacing:-0.2px">A325</div>
<div class="a" style="left:668.8px;top:403.0px;font-size:9px;color:#555;letter-spacing:-0.2px">3/4 inch</div>
<div class="a" style="left:743.5px;top:403.0px;font-size:9px;color:#555;letter-spacing:-0.2px">10.9</div>
<div class="a" style="left:820.2px;top:403.0px;font-size:9px;color:#555;letter-spacing:-0.2px">4</div>
<div class="a" style="left:896.6px;top:403.0px;font-size:9px;color:#555;letter-spacing:-0.2px">A325</div>
</div>
</body></html>
